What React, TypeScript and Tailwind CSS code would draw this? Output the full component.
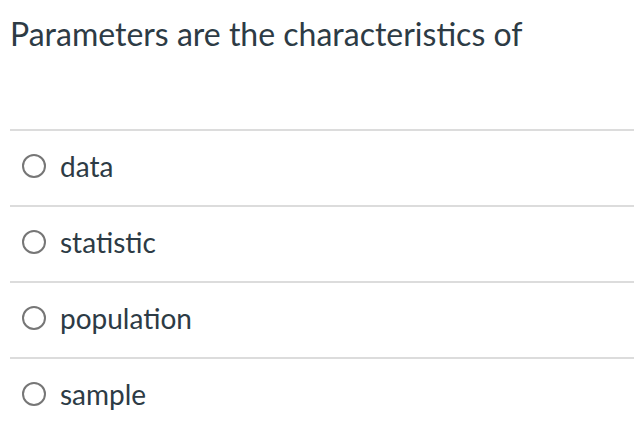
import React from "react";

const options = ["data", "statistic", "population", "sample"];

export default function App() {
  return (
    <div
      className="w-[634px] h-[432px] bg-white overflow-hidden pl-[10px] text-[#2d3b45]"
      style={{ fontFamily: "Lato, 'Open Sans', sans-serif" }}
    >
      <div className="h-[129px] pt-[13px] text-[32px] leading-[42px]">
        Parameters are the characteristics of
      </div>
      {options.map((o) => (
        <div
          key={o}
          className="h-[76px] border-t-2 border-[#dcdcdc] flex items-center"
        >
          <span className="ml-[12px] -mt-[4px] w-[24px] h-[24px] rounded-full border-2 border-[#767676] bg-white shrink-0" />
          <span className="ml-[14px] text-[28px] leading-[34px] -mt-[4px]">{o}</span>
        </div>
      ))}
    </div>
  );
}
